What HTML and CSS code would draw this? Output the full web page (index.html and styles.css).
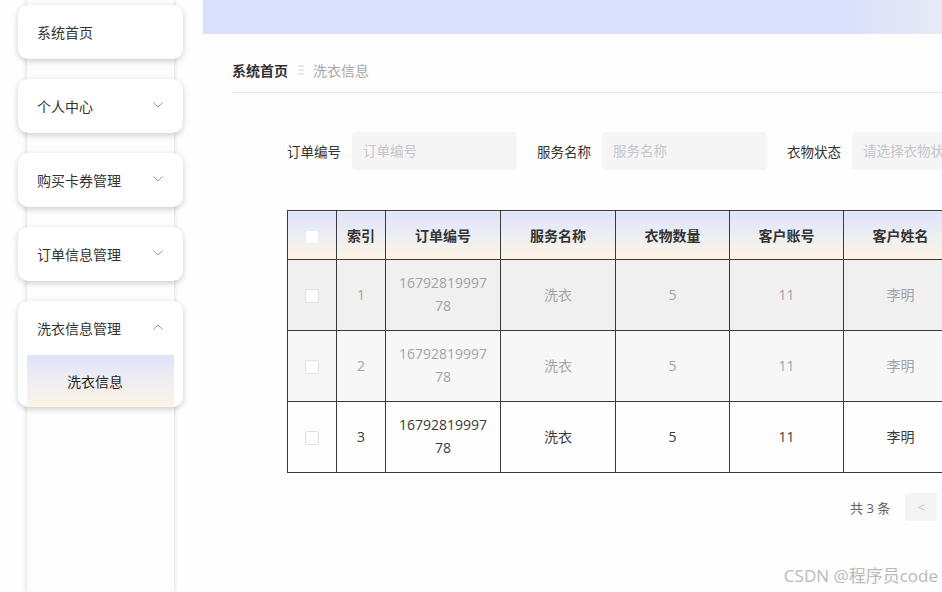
FILE: index.html
```html
<!DOCTYPE html>
<html lang="zh-CN">
<head>
    <meta charset="UTF-8">
    <meta name="viewport" content="width=device-width, initial-scale=1.0">
    <title>洗衣信息</title>
    <link rel="stylesheet" href="styles.css">
</head>
<body>

    <!-- Sidebar -->
    <aside class="aside">
        <div class="menu-strip">
            <div class="menu-card">
                <div class="menu-title">系统首页</div>
            </div>
            <div class="menu-card">
                <div class="menu-title">个人中心
                    <svg class="arrow" viewBox="0 0 10 6"><path d="M0.5 0.5 L5 5 L9.5 0.5"/></svg>
                </div>
            </div>
            <div class="menu-card">
                <div class="menu-title">购买卡券管理
                    <svg class="arrow" viewBox="0 0 10 6"><path d="M0.5 0.5 L5 5 L9.5 0.5"/></svg>
                </div>
            </div>
            <div class="menu-card">
                <div class="menu-title">订单信息管理
                    <svg class="arrow" viewBox="0 0 10 6"><path d="M0.5 0.5 L5 5 L9.5 0.5"/></svg>
                </div>
            </div>
            <div class="menu-card">
                <div class="menu-title">洗衣信息管理
                    <svg class="arrow" viewBox="0 0 10 6"><path d="M0.5 5.5 L5 1 L9.5 5.5"/></svg>
                </div>
                <div class="submenu-item">洗衣信息</div>
            </div>
        </div>
    </aside>

    <!-- Main -->
    <main class="main">
        <div class="topbar"></div>

        <div class="content">
            <div class="breadcrumb">
                <span class="crumb-home">系统首页</span>
                <svg class="crumb-sep" viewBox="0 0 6 10"><path d="M0 1 H6 M0.5 5 H5.5 M0 9 H6"/></svg>
                <span class="crumb-current">洗衣信息</span>
            </div>

            <form class="search-form">
                <div class="form-item">
                    <label class="form-label">订单编号</label>
                    <input class="form-input" type="text" placeholder="订单编号">
                </div>
                <div class="form-item">
                    <label class="form-label">服务名称</label>
                    <input class="form-input" type="text" placeholder="服务名称">
                </div>
                <div class="form-item">
                    <label class="form-label">衣物状态</label>
                    <input class="form-input" type="text" placeholder="请选择衣物状态">
                </div>
            </form>

            <table class="data-table">
                <colgroup>
                    <col style="width: 49px">
                    <col style="width: 49px">
                    <col style="width: 115px">
                    <col style="width: 115px">
                    <col style="width: 114px">
                    <col style="width: 114px">
                    <col style="width: 114px">
                    <col style="width: 114px">
                </colgroup>
                <thead>
                    <tr>
                        <th><span class="checkbox"></span></th>
                        <th>索引</th>
                        <th>订单编号</th>
                        <th>服务名称</th>
                        <th>衣物数量</th>
                        <th>客户账号</th>
                        <th>客户姓名</th>
                        <th>客户手机</th>
                    </tr>
                </thead>
                <tbody>
                    <tr class="row-one">
                        <td><span class="checkbox"></span></td>
                        <td>1</td>
                        <td>1679281999778</td>
                        <td>洗衣</td>
                        <td>5</td>
                        <td>11</td>
                        <td>李明</td>
                        <td>13800000000</td>
                    </tr>
                    <tr class="row-two">
                        <td><span class="checkbox"></span></td>
                        <td>2</td>
                        <td>1679281999778</td>
                        <td>洗衣</td>
                        <td>5</td>
                        <td>11</td>
                        <td>李明</td>
                        <td>13800000000</td>
                    </tr>
                    <tr class="row-three">
                        <td><span class="checkbox"></span></td>
                        <td>3</td>
                        <td>1679281999778</td>
                        <td>洗衣</td>
                        <td>5</td>
                        <td>11</td>
                        <td>李明</td>
                        <td>13800000000</td>
                    </tr>
                </tbody>
            </table>

            <div class="pagination">
                <span class="total">共 3 条</span>
                <button class="page-btn" type="button">&lt;</button>
                <button class="page-num" type="button">1</button>
            </div>
        </div>
    </main>

    <div class="watermark">CSDN @程序员code</div>

</body>
</html>
```

FILE: styles.css
```css
/* General Reset */
* {
    margin: 0;
    padding: 0;
    box-sizing: border-box;
    font-family: 'Open Sans', 'Noto Sans CJK SC', sans-serif;
}

body {
    display: flex;
    width: 942px;
    height: 592px;
    background-color: #fefefe;
    color: #333;
    font-size: 14px;
    overflow: hidden;
}

/* Sidebar */
.aside {
    width: 203px;
    flex-shrink: 0;
    height: 100%;
}

.menu-strip {
    width: 147px;
    height: 100%;
    margin-left: 27px;
    padding-top: 5px;
    background-color: #fdfdfd;
    box-shadow: 0 0 5px rgba(0, 0, 0, 0.18);
    display: flex;
    flex-direction: column;
    gap: 20px;
}

.menu-card {
    margin: 0 -9px;
    background-color: #fff;
    border-radius: 10px;
    box-shadow: 0 2px 6px rgba(0, 0, 0, 0.2);
    overflow: hidden;
}

.menu-title {
    height: 54px;
    padding: 0 19px;
    display: flex;
    align-items: center;
    justify-content: space-between;
    color: #333;
    font-size: 14px;
}

.arrow {
    width: 10px;
    height: 6px;
    margin-right: 1px;
    margin-top: -3px;
    fill: none;
    stroke: #999;
    stroke-width: 1;
}

.submenu-item {
    height: 52px;
    margin: 0 9px;
    padding-left: 40px;
    display: flex;
    align-items: center;
    color: #222;
    font-size: 14px;
    background: linear-gradient(180deg, #dde3fb 0%, #f1eef0 55%, #fcf3e4 100%);
}

/* Main */
.main {
    flex: 1;
    min-width: 0;
    display: flex;
    flex-direction: column;
    overflow: hidden;
}

.topbar {
    height: 34px;
    flex-shrink: 0;
    background: linear-gradient(90deg, #d8e0fb 0%, #d9e0fb 86%, #e8eaf5 100%);
}

.content {
    padding-left: 29px;
}

/* Breadcrumb */
.breadcrumb {
    display: flex;
    align-items: center;
    height: 59px;
    padding-top: 13px;
    border-bottom: 1px solid #e6e6e6;
    font-size: 14px;
}

.crumb-home {
    font-weight: bold;
    color: #303133;
}

.crumb-sep {
    width: 6px;
    height: 10px;
    margin: 0 9px 0 10px;
    fill: none;
    stroke: #d0d0d0;
    stroke-width: 1;
}

.crumb-current {
    color: #a6a6a6;
}

/* Search Form */
.search-form {
    display: flex;
    gap: 20px;
    margin-top: 39px;
    padding-left: 55px;
    white-space: nowrap;
}

.form-item {
    display: flex;
    align-items: center;
    flex-shrink: 0;
}

.form-label {
    padding-right: 11px;
    color: #333;
    font-size: 13.5px;
}

.form-input {
    width: 165px;
    height: 38px;
    padding: 0 11px;
    border: none;
    border-radius: 4px;
    background-color: #f5f5f5;
    font-size: 13.5px;
    color: #333;
    outline: none;
}

.form-input::placeholder {
    color: #c3c6cc;
}

/* Table */
.data-table {
    margin-top: 40px;
    margin-left: 55px;
    border-collapse: collapse;
    table-layout: fixed;
    width: 784px;
}

.data-table th,
.data-table td {
    border: 1px solid #3a3a3a;
    text-align: center;
    padding: 0 10px;
    line-height: 23px;
    word-break: break-all;
}

.data-table th {
    height: 49px;
    font-weight: bold;
    color: #333;
    background: linear-gradient(180deg, #dce3fb 0%, #eeeef3 50%, #fdf4e2 100%);
}

.data-table td {
    height: 71px;
    padding-bottom: 2px;
    color: #a3a3a3;
}

.row-one td {
    background-color: #f0f0f0;
}

.row-two td {
    background-color: #f7f7f7;
}

.row-three td {
    background-color: #fefefe;
    color: #3a3a3a;
}

.checkbox {
    display: inline-block;
    width: 14px;
    height: 14px;
    vertical-align: middle;
    border: 1px solid #dcdfe6;
    border-radius: 2px;
    background-color: #fff;
}

th .checkbox {
    border-color: #e8e8ee;
}

/* Pagination */
.pagination {
    display: flex;
    align-items: center;
    margin-top: 20px;
    margin-left: 618px;
    white-space: nowrap;
}

.total {
    color: #606266;
    font-size: 13px;
    margin-right: 15px;
}

.page-btn,
.page-num {
    width: 32px;
    height: 28px;
    flex-shrink: 0;
    border: none;
    border-radius: 2px;
    background-color: #f4f4f5;
    color: #c0c4cc;
    font-size: 13px;
    margin-right: 10px;
}

.page-num {
    color: #606266;
}

/* Watermark */
.watermark {
    position: absolute;
    right: 4px;
    bottom: 5px;
    color: #b9b9b9;
    font-size: 17px;
    text-shadow: 0 0 2px #fff;
}
```
